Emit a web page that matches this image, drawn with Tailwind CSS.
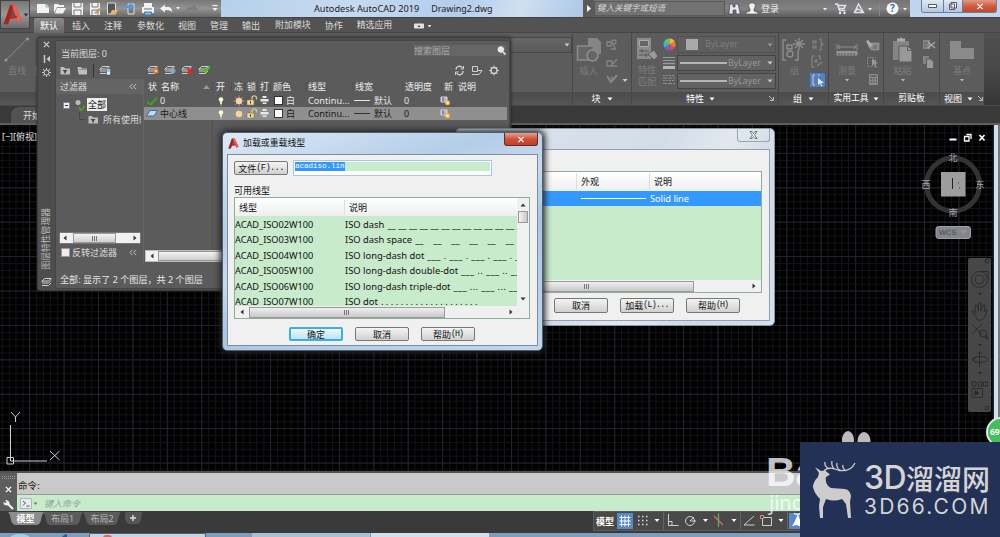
<!DOCTYPE html>
<html lang="zh-CN">
<head>
  <meta charset="UTF-8" />
  <meta name="viewport" content="width=device-width, initial-scale=1.0"/>
  <title>Autodesk AutoCAD 2019</title>
  <script src="https://cdn.jsdelivr.net/npm/@tailwindcss/browser@4"></script>
  <style>
    body {
      font-family: 'Noto Sans', 'Noto Sans CJK SC', sans-serif;
    }
    svg {
      flex-shrink: 0;
    }
  </style>
</head>
<body class="relative w-[1000px] h-[537px] overflow-hidden bg-black text-[9px] leading-none whitespace-nowrap text-[#dcdcdc] flex flex-col">

  <!-- Shared icons -->
  <svg class="hidden">
    <symbol id="layers" viewBox="0 0 12 12"><path d="M3.500 2.500H10L7.500 5H1zM1 7h6.500L10 4.500M1 9.500h6.500L10 7M1 5v1M10 2.500v1" fill="none" stroke="#cfcfcf" stroke-width="1"/></symbol>
    <symbol id="bulb" viewBox="0 0 8 10"><circle cx="4" cy="3.500" r="2.300" fill="#fdfbd0"/><path d="M3 5h2v2H3z" fill="#f3edb0"/><path d="M3 7.500h2M3.300 9h1.400" stroke="#ddd"/></symbol>
    <symbol id="sun" viewBox="0 0 12 12"><path d="M6 .5v11M.5 6h11M2 2l8 8M10 2l-8 8" stroke="#a79888" stroke-width="1"/><circle cx="6" cy="6" r="3.200" fill="#f8d2a4"/></symbol>
    <symbol id="lock" viewBox="0 0 12 11"><path d="M6 5V3a2.200 2 0 0 1 4.500 0v1.500" fill="none" stroke="#d9c58b" stroke-width="1.300"/><path d="M1 5h7v5H1z" fill="#efd9a0" stroke="#8a7747" stroke-width=".6"/><path d="M4.500 6.500v2" stroke="#222"/></symbol>
    <symbol id="plot" viewBox="0 0 9 9"><path d="M2.500 0h4v2h-4zM.5 3h8v2.500h-8zM2.500 6.500h4V8h-4z" fill="#e8e8e8"/></symbol>
    <symbol id="newvp" viewBox="0 0 11 10"><path d="M1 1h6v5H1z" fill="#a9b8cc" stroke="#ddd"/><path d="M3 1v5" stroke="#667"/><circle cx="7.500" cy="6.800" r="2.500" fill="#ffb52c"/><circle cx="7.500" cy="6.800" r="1.200" fill="#ffef9a"/></symbol>
    <symbol id="folder" viewBox="0 0 11 9"><path d="M.5 1h3.500l1 1.500h5V8.500H1.500z" fill="#bdbdbd"/><path d="M2 3.500h8" stroke="#777" stroke-width=".6"/></symbol>
    <symbol id="funnel" viewBox="0 0 11 9"><path d="M.5 1h3.500l1 1.500h5V8.500H.5z" fill="#bdbdbd"/><path d="M2.500 4h5L5.800 6v1.500H4.300V6z" fill="#444"/></symbol>
    <symbol id="down" viewBox="0 0 6 4"><path d="M.5.5h5L3 3.500z" fill="currentColor"/></symbol>
    <symbol id="left" viewBox="0 0 4 6"><path d="M3.500.5v5L.5 3z" fill="#333"/></symbol>
    <symbol id="right" viewBox="0 0 4 6"><path d="M.5.5v5L3.500 3z" fill="#333"/></symbol>
    <symbol id="grip" viewBox="0 0 6 5"><path d="M.5 0v5M2.500 0v5M4.500 0v5" stroke="#777" stroke-width="1"/></symbol>
    <symbol id="cross" viewBox="0 0 8 8"><path d="M1 1l6 6M7 1L1 7" stroke="currentColor" stroke-width="1.500"/></symbol>
    <symbol id="alogo" viewBox="0 0 28 24"><path d="M1 23L10 1h7l10 18-6 2-2-5-9 1-3 6z" fill="#cf3f35"/><path d="M10 1l4 1-1 7-6 14H1z" fill="#a5241f"/><path d="M12 11l1.500-4 3.500 6-6 1z" fill="#585858"/><path d="M17 1l10 18-6 2L13 2z" fill="#e36457"/><path d="M10 14l9-1 1 3-11 1z" fill="#b52f28"/></symbol>
    <symbol id="rings" viewBox="0 0 9 8"><path d="M4 1L1 4l3 3M8 1L5 4l3 3" fill="none" stroke="#c8c8c8" stroke-width="1.100"/></symbol>
  </svg>

  <!-- Title bar -->
  <header class="flex h-[17px] shrink-0 bg-gradient-to-b from-[#bfd4ee] to-[#c3d7ee] pl-[30px] text-[#222]">
    <div class="flex w-[191px] items-center bg-gradient-to-b from-[#777] via-[#939393] to-[#686868] pl-[5px]">
      <svg class="w-[186px] h-[17px]" viewBox="35 0 186 17">
        <g fill="#f2f2f2">
          <path d="M37 4h9l3 3v6H37z"/><path d="M46 4v3h3" fill="none" stroke="#888" stroke-width=".7"/>
          <path d="M54 4h4l1 1h5v2h-7l-3 6z"/><path d="M57 8h9l-3 5.500h-8z"/>
          <path d="M72 3h11v12H72zM90 3h10v12H90z"/><path d="M107.500 3h8v11h-8z" fill="#555" stroke="#ddd"/>
          <path d="M128 4h6v10h-6z" fill="#777" stroke="#ddd"/>
          <path d="M144 3h8v4h-8zM142 7h12v6h-12z"/><path d="M144 9h8M144.500 12h7v3h-7z" stroke="#4a7396" fill="#7bc1ee"/>
          <path d="M160 8.500l5-4V7h3q4 0 4 5-2-2.500-7-2v2.500z"/>
        </g>
        <path d="M74 3v4h7V3M74 15v-5h7v5M92 3v4h6V3M92 15v-5h6v5" fill="none" stroke="#777"/>
        <path d="M94 13l5-5 2 2-5 4z" fill="#cc9855"/>
        <path d="M112 10h6l-2 4h-6z" fill="#e6b563"/>
        <path d="M125 5.500h5V3l4 4-4 3.500V8h-5z" fill="#4b9ce0"/>
        <path d="M198 8.500l-5-4V7h-3q-4 0-4 5 2-2.500 7-2v2.500z" fill="#7e7e7e"/>
        <path d="M176 7h4l-2 2.500zM212.500 8h5l-2.500 3z" fill="#f0f0f0"/><path d="M203 7h4l-2 2.500z" fill="#999"/>
        <path d="M212.500 5.500h5" stroke="#f0f0f0" stroke-width="1.200"/>
      </svg>
    </div>
    <div class="flex w-[362px] items-center bg-[linear-gradient(115deg,#b6cfec,#c6daf0_35%,#b3cdeb_65%,#cfe0f1_82%,#abc7e6)] pl-[93px] text-[9.200px]">
      <span>Autodesk AutoCAD 2019</span>
      <span class="pl-[12px] text-[9px]">Drawing2.dwg</span>
    </div>
    <div class="flex w-[327px] items-center bg-gradient-to-b from-[#757575] via-[#828282] to-[#5c5c5c]">
      <div class="flex w-[11px] h-full items-center justify-center bg-[#5a5a5a]"><svg class="w-[4px] h-[7px]" viewBox="0 0 4 7"><path d="M0 0v7l4-3.500z" fill="#fff"/></svg></div>
      <div class="flex w-[131px] h-[15px] items-center border border-[#5a5a5a] bg-[#727272] px-[2px] text-[8.500px] italic text-[#d5d5d5]">键入关键字或短语</div>
      <svg class="w-[36px] h-[17px]" viewBox="725 0 36 17">
        <path d="M730 4h3v3h2V4h3l2 8v2h-4v-4h-3v4h-4v-2z" fill="#e4e9f2" stroke="#3a3f4a" stroke-width=".7"/>
        <path d="M752 3c3 0 3.500 2 3 4l-1 2v2l4 1.500V14h-12v-1.500l4-1.500V9l-1-2c-.5-2 0-4 3-4z" fill="#f2f2f2" stroke="#444" stroke-width=".6"/>
      </svg>
      <span class="text-[9px] text-[#f0f0f0]">登录</span>
      <svg class="ml-auto w-[88px] h-[17px]" viewBox="822 0 88 17">
        <path d="M823 8h4l-2 2.500zM868 8h4l-2 2.500zM903 8h4l-2 2.500z" fill="#eee"/>
        <path d="M835 4h2.500l2 6.500h6M838 5.500h7.500L844 8.500h-5" fill="none" stroke="#dfe5f0" stroke-width="1.500"/><circle cx="840" cy="13" r="1.200" fill="#eee"/><circle cx="844.500" cy="13" r="1.200" fill="#eee"/>
        <path d="M858.500 4l-4 8.500h9zM854 12l4-3 5 3" fill="none" stroke="#dfe5f0" stroke-width="1.400"/>
        <path d="M879.500 3v13" stroke="#888"/>
        <circle cx="892.500" cy="8.500" r="6" fill="#f6f6f6"/>
        <text x="892.500" y="12.200" text-anchor="middle" font-size="10" font-weight="bold" fill="#2671b8">?</text>
      </svg>
    </div>
    <div class="flex flex-1 pl-[11px]">
      <div class="flex h-[13px] w-[76px] overflow-hidden rounded-b-[3px] border border-t-0 border-[#6f7f95] text-[#555]">
        <div class="flex w-[21px] items-center justify-center bg-gradient-to-b from-[#dfe9f5] to-[#b4c6dc]"><svg class="w-[9px] h-[4px]" viewBox="0 0 9 4"><path d="M.5.5h8v3h-8z" fill="#fff" stroke="#556"/></svg></div>
        <div class="flex w-[20px] items-center justify-center border-x border-[#6f7f95] bg-gradient-to-b from-[#dfe9f5] to-[#b4c6dc]"><svg class="w-[8px] h-[8px]" viewBox="0 0 8 8"><path d="M2 .5h5.500V6H2zM.5 2h5v5.500h-5z" fill="#fff" stroke="#556"/><path d="M2.500 4h1v1h-1z" fill="#556"/></svg></div>
        <div class="flex flex-1 items-center justify-center bg-gradient-to-b from-[#e39a84] via-[#cf5d42] to-[#c4432a] text-white"><svg class="w-[8px] h-[7px]"><use href="#cross"/></svg></div>
      </div>
    </div>
  </header>

  <!-- Ribbon tabs -->
  <nav class="flex h-[16px] shrink-0 items-center border-b border-[#454545] border-t border-t-[#444] bg-[#535353] pl-[34px] pt-px text-[9px]">
    <a class="flex h-[15px] w-[30px] items-center justify-center rounded-t-[2px] bg-gradient-to-b from-[#8a8a8a] to-[#6a6a6a] text-white">默认</a>
    <a class="pl-[8px]">插入</a>
    <a class="pl-[14px]">注释</a>
    <a class="pl-[15px]">参数化</a>
    <a class="pl-[14px]">视图</a>
    <a class="pl-[14px]">管理</a>
    <a class="pl-[14px]">输出</a>
    <a class="pl-[15px] text-[8.900px]">附加模块</a>
    <a class="pl-[14px]">协作</a>
    <a class="pl-[14px] text-[8.900px]">精选应用</a>
    <svg class="ml-[22px] w-[18px] h-[6px]" viewBox="0 0 18 6"><rect width="10" height="5" y=".5" rx="1" fill="#e2e2e2"/><path d="M3.500 4L5 2l1.500 2z" fill="#444"/><path d="M13.500 2h4l-2 2.500z" fill="#e2e2e2"/></svg>
  </nav>

  <!-- Ribbon panels -->
  <section class="flex h-[73px] shrink-0 border-b border-[#4a4a4a] bg-[#5c5c5c] text-[#7d7d7d]">
    <div class="flex w-[573px] flex-col border-r border-[#474747]">
      <div class="flex flex-1 items-start justify-between pt-[4px]">
        <div class="flex w-[60px] flex-col pl-[4px]">
          <svg class="w-[26px] h-[26px]" viewBox="0 0 26 26"><path d="M2 23L23 2" stroke="#888" stroke-width="1"/><circle cx="2" cy="23" r="1.500" fill="#999"/><circle cx="23.500" cy="2" r="1.500" fill="#999"/></svg>
          <div class="flex gap-[7px] pl-[4px] pt-[3px]"><span>直线</span><span>多段线</span></div>
        </div>
        <div class="flex h-[16px] w-[80px] items-center justify-end border border-[#464646] bg-gradient-to-b from-[#666] to-[#5a5a5a] pr-px text-[#ccc]"><svg class="w-[6px] h-[4px]"><use href="#down"/></svg></div>
      </div>
      <div class="h-[13px] bg-gradient-to-b from-[#4b4b4b] to-[#555]"></div>
    </div>

    <div class="flex w-[59px] flex-col border-r border-[#474747]">
      <div class="flex-1 pl-[3px] pt-[3px]">
        <svg class="h-[52px] w-[54px]" viewBox="576 36 54 52">
          <path d="M588 38h9l4 4v12h-13z" fill="#858585"/><path d="M577.500 46h16v14h-16z" fill="#666" stroke="#8a8a8a" stroke-width="1.500"/><circle cx="592.500" cy="55.500" r="5.500" fill="#666" stroke="#8f8f8f" stroke-width="1.500"/>
          <g fill="none" stroke="#858585" stroke-width="1.300"><path d="M607 42h4v4h-4zM611 49h5M613 44l2 4"/><circle cx="614" cy="42" r="2"/><path d="M607 61h5v5h-5zM611 66l6-7M608 66h9"/><path d="M607 76l4 6 5-6M611 77l2 3 4-5" stroke-width="2"/></g>
          <path d="M622.500 79h5l-2.500 3z" fill="#ccc"/>
          <text x="588.500" y="73.500" text-anchor="middle" font-size="9" fill="#7d7d7d">插入</text>
        </svg>
      </div>
      <div class="flex h-[13px] items-center justify-center gap-[6px] bg-gradient-to-b from-[#4b4b4b] to-[#555] text-white"><span>块</span><svg class="w-[6px] h-[4px]"><use href="#down"/></svg></div>
    </div>

    <div class="flex w-[147px] flex-col border-r border-[#474747]">
      <div class="flex flex-1 pt-[3px]">
        <div class="flex w-[30px] flex-col items-center text-[9px]">
          <svg class="h-[27px] w-[24px]" viewBox="0 0 24 27"><path d="M2 2h14v21H2z" fill="#8c8c8c"/><path d="M4.500 4.500h9v6h-9z" fill="#666" stroke="#aaa"/><path d="M4 15h10M4 19h10M7 13v4M11 17v4" stroke="#555"/><path d="M13 18l6-4 4 6-4 4z" fill="#999" stroke="#5c5c5c"/></svg>
          <span class="pt-[2px]">特性</span><span class="pt-[3px]">匹配</span>
        </div>
        <div class="flex w-[14px] flex-col items-center gap-[5px] pt-[2px]">
          <svg class="h-[13px] w-[13px]" viewBox="-6.500 -6.500 13 13"><path d="M0 0V-6A6 6 0 0 1 5.200-3z" fill="#f6b93b"/><path d="M0 0L5.200-3A6 6 0 0 1 5.200 3z" fill="#f2792e"/><path d="M0 0L5.200 3A6 6 0 0 1 0 6z" fill="#e2495c"/><path d="M0 0V6A6 6 0 0 1-5.200 3z" fill="#7a5bd6"/><path d="M0 0L-5.200 3A6 6 0 0 1-5.200-3z" fill="#35b7d8"/><path d="M0 0L-5.200-3A6 6 0 0 1 0-6z" fill="#63c95a"/></svg>
          <svg class="h-[13px] w-[12px]" viewBox="0 0 12 13"><path d="M0 1.500h12M0 4.500h12" stroke="#9a9a9a"/><path d="M0 7.500h12" stroke="#9a9a9a" stroke-width="1.500"/><path d="M0 11.500h12" stroke="#b5b5b5" stroke-width="3"/></svg>
          <svg class="h-[11px] w-[12px]" viewBox="0 0 12 11"><path d="M0 1.500h12M0 6.500h12" stroke="#8f8f8f" stroke-dasharray="2 1"/><path d="M0 4h12M0 9.500h12" stroke="#8f8f8f" stroke-dasharray="4 1"/></svg>
        </div>
        <div class="flex flex-col gap-[2px] pl-px text-[8.800px] text-[#979797]">
          <div class="flex h-[17px] w-[99px] items-center border border-[#505050] bg-[#5e5e5e] pl-[8px]"><span class="h-[11px] w-[12px] bg-[#a9a9a9]"></span><span class="pl-[7px] text-[#7e7e7e]">ByLayer</span><svg class="ml-auto mr-[2px] w-[6px] h-[4px]"><use href="#down"/></svg></div>
          <div class="flex h-[16px] w-[99px] items-center border border-[#444] bg-[#626262] pl-[2px]"><span class="h-[2px] w-[47px] bg-[#b5b5b5]"></span><span class="pl-px">ByLayer</span><svg class="ml-auto mr-[2px] w-[6px] h-[4px] text-[#ccc]"><use href="#down"/></svg></div>
          <div class="flex h-[16px] w-[99px] items-center border border-[#444] bg-[#626262] pl-[2px]"><span class="h-[2px] w-[47px] bg-[#b5b5b5]"></span><span class="pl-px">ByLayer</span><svg class="ml-auto mr-[2px] w-[6px] h-[4px] text-[#ccc]"><use href="#down"/></svg></div>
        </div>
      </div>
      <div class="flex h-[13px] items-center bg-gradient-to-b from-[#4b4b4b] to-[#555] pl-[54px] text-white"><span>特性</span><svg class="ml-[5px] w-[6px] h-[4px]"><use href="#down"/></svg><svg class="ml-auto mr-[4px] w-[5px] h-[5px]" viewBox="0 0 5 5"><path d="M0 0l4 4M4.500 1v3.500H1" stroke="#bbb" fill="none"/></svg></div>
    </div>

    <div class="flex w-[50px] flex-col border-r border-[#474747]">
      <div class="flex-1 pl-[2px] pt-[3px]">
        <svg class="h-[54px] w-[46px]" viewBox="781 36 46 54">
          <g fill="none" stroke="#8d8d8d" stroke-width="1.400"><path d="M786 40h-3v20h3M795 60h3V50M787 45h5v4h-5z"/><circle cx="790" cy="54" r="3"/><path d="M799 38v12M793 44h12M795 40l8 8M803 40l-8 8"/></g>
          <g fill="none" stroke="#858585" stroke-width="1.200"><path d="M813 41h3v2h-3zM813 46h3v2h-3zM819 39h2v4l2 1-2 1v5h-2M815 56h-3v11h3M818 56h2v4M815 60h2v2h-2zM817 66l5-4"/></g>
          <path d="M809.500 72.500h16v15h-16z" fill="#5a80b9" stroke="#3d5d92"/><path d="M815 75h-2v10h2M818 75h2" fill="none" stroke="#bcd" stroke-width="1"/><path d="M818 78v7l2-1.500 1.500 3 1-.5-1.500-3h3z" fill="#dde6f2"/>
          <text x="794.500" y="73.500" text-anchor="middle" font-size="9" fill="#7d7d7d">组</text>
        </svg>
      </div>
      <div class="flex h-[13px] items-center justify-center gap-[6px] bg-gradient-to-b from-[#4b4b4b] to-[#555] text-white"><span>组</span><svg class="w-[6px] h-[4px]"><use href="#down"/></svg></div>
    </div>

    <div class="flex w-[55px] flex-col border-r border-[#474747]">
      <div class="flex-1 pl-[4px] pt-[3px]">
        <svg class="h-[54px] w-[48px]" viewBox="833 36 48 54">
          <path d="M837 44v6M857 44v6M838 47h18M840 45l-2 2 2 2M854 45l2 2-2 2" stroke="#8d8d8d" fill="none"/><path d="M836.500 51h21v4.500h-21z" fill="#949494"/><path d="M839 53v2M842 53v2M845 53v2M848 53v2M851 53v2M854 53v2" stroke="#555"/>
          <path d="M871 43h8v7h-8z" fill="#8a8a8a" stroke="#aaa" stroke-width=".5"/><path d="M873 46h4M873 48h4" stroke="#666"/><path d="M868 40l5 5-2 1-1 3-4-8z" fill="#aaa"/>
          <path d="M867.500 57.500h8v9h-8z" fill="none" stroke="#888" stroke-dasharray="1.500 1"/><path d="M872 58v8l2-2 2 4 1-.5-2-4h3z" fill="#999"/>
          <path d="M869 74h9v11h-9z" fill="#8a8a8a"/><path d="M870.500 76h6M870.500 79h1.500M873 79h1.500M876 79h1M870.500 82h1.500M873 82h1.500M876 82h1" stroke="#5a5a5a" stroke-width="1.300"/>
          <path d="M845 79h4l-2 2.500z" fill="#bbb"/>
          <text x="847" y="73.500" text-anchor="middle" font-size="9" fill="#7d7d7d">测量</text>
        </svg>
      </div>
      <div class="flex h-[13px] items-center justify-center gap-[4px] bg-gradient-to-b from-[#4b4b4b] to-[#555] text-[8.800px] text-white"><span>实用工具</span><svg class="w-[6px] h-[4px]"><use href="#down"/></svg></div>
    </div>

    <div class="flex w-[56px] flex-col border-r border-[#474747]">
      <div class="flex-1 pl-[4px] pt-[3px]">
        <svg class="h-[54px] w-[48px]" viewBox="888 36 48 54">
          <path d="M893 41h16v19h-16z" fill="#858585"/><path d="M897 38.500h3l1-1.500 1 1.500h3v3h-8z" fill="#aaa"/><path d="M899 46h9l4 4v12h-13z" fill="#999" stroke="#5c5c5c"/><path d="M907.500 46v4.500h4" fill="none" stroke="#5c5c5c"/>
          <path d="M923 40h7v9h-7z" fill="#858585"/><path d="M924 43h4M924 46h3" stroke="#5c5c5c"/><path d="M928 42l7 6M935 42l-7 6" stroke="#aaa" stroke-width="1.200"/>
          <path d="M923 56h6v8h-6z" fill="#858585"/><path d="M926.500 59h4l3 2.500v7h-7z" fill="#999" stroke="#5c5c5c"/>
          <path d="M901 79h4l-2 2.500z" fill="#bbb"/>
          <text x="902.500" y="73.500" text-anchor="middle" font-size="9" fill="#7d7d7d">粘贴</text>
        </svg>
      </div>
      <div class="flex h-[13px] items-center justify-center bg-gradient-to-b from-[#4b4b4b] to-[#555] text-[8.800px] text-white">剪贴板</div>
    </div>

    <div class="flex w-[44px] flex-col">
      <div class="flex-1 pl-[5px] pt-[3px]">
        <svg class="h-[54px] w-[34px]" viewBox="945 36 34 54">
          <path d="M950 41h11v7h13v11h-24z" fill="#8a8a8a"/>
          <path d="M960 79h4l-2 2.500z" fill="#bbb"/>
          <text x="962" y="73.500" text-anchor="middle" font-size="9" fill="#7d7d7d">基点</text>
        </svg>
      </div>
      <div class="flex h-[13px] items-center gap-[5px] bg-gradient-to-b from-[#4b4b4b] to-[#555] pl-[4px] text-white"><span>视图</span><svg class="w-[6px] h-[4px]"><use href="#down"/></svg><svg class="w-[5px] h-[5px]" viewBox="0 0 5 5"><path d="M0 0l4 4M4.500 1v3.500H1" stroke="#bbb" fill="none"/></svg></div>
    </div>
    <div class="flex-1 bg-gradient-to-b from-[#505050] via-[#484848] to-[#363636]"></div>
  </section>

  <!-- Drawing tabs -->
  <div class="flex h-[19px] shrink-0 items-end border-b-2 border-[#5e5e5e] bg-[#393939]">
    <div class="ml-[11px] flex h-[16px] w-[60px] items-center rounded-tl-[8px] bg-[#525252] pl-[12px]">开始</div>
  </div>

  <!-- Drawing area -->
  <main class="flex h-[346px] shrink-0">
    <svg class="w-[994px] h-[346px] bg-black" viewBox="0 125 994 346">
      <defs>
        <pattern id="minor" x="29.300" y="153" width="6.880" height="6.880" patternUnits="userSpaceOnUse"><path d="M0 .5h6.880M.5 0v6.880" stroke="#121317" stroke-width="1"/></pattern>
        <pattern id="major" x="29.100" y="152.800" width="34.420" height="34.420" patternUnits="userSpaceOnUse"><path d="M0 .5h34.420M.5 0v34.420" stroke="#20222d" stroke-width="1"/></pattern>
      </defs>
      <rect y="125" width="994" height="346" fill="url(#minor)"/>
      <rect y="125" width="994" height="346" fill="url(#major)"/>
      <text x="2" y="139.500" font-size="9" fill="#e0e0e0">[−][俯视][二维线框]</text>

      <!-- UCS icon -->
      <g fill="none" stroke="#cfcfcf" stroke-width="1">
        <path d="M10.500 425v36h36.500M7 457.500h6.500v6.500H7z"/>
        <path d="M11 412l4.500 5 4.500-5M15.500 417v5M50 451l9.500 9M59.500 451l-9.500 9"/>
      </g>

      <!-- Window controls -->
      <path d="M949.500 139.500h7" stroke="#fff" stroke-width="2"/>
      <path d="M966.500 134.500h4.500v4.500M964.500 136.500h4.500v4.500h-4.500z" fill="none" stroke="#fff" stroke-width="1.300"/>
      <path d="M979.500 135l5 5.500M984.500 135l-5 5.500" stroke="#fff" stroke-width="1.700"/>

      <!-- View cube -->
      <circle cx="953" cy="184.500" r="26.500" fill="none" stroke="#333" stroke-width="5"/>
      <path d="M941 172h24.500v24.500H941z" fill="#9d9d9d"/>
      <path d="M952.500 178v11" stroke="#222" stroke-width="1"/><path d="M958 183h1M959 188h1" stroke="#444"/>
      <g font-size="9" fill="#a5a5a5" text-anchor="middle"><text x="953" y="161">北</text><text x="953" y="215.500">南</text><text x="926" y="188">西</text><text x="980" y="188">东</text></g>
      <rect x="936" y="226.500" width="34.500" height="12" rx="2.500" fill="#85868c" stroke="#a0a0a6"/>
      <text x="939" y="235.300" font-size="7.500" fill="#45464c" font-family="Liberation Sans, sans-serif">WCS</text><path d="M961 231h5l-2.500 3z" fill="none" stroke="#aaa" stroke-width=".7"/>

      <!-- Navigation bar -->
      <rect x="968" y="258" width="23" height="154" rx="2" fill="#474747"/>
      <g fill="none" stroke="#2c2c2c" stroke-width="1">
        <circle cx="987" cy="261" r="2"/><circle cx="987" cy="408" r="2"/>
        <circle cx="979.500" cy="279.500" r="8"/><circle cx="979.500" cy="279.500" r="4.500"/><path d="M980 271.500h8v8"/>
        <path d="M976 317l-4-6q1-2 3 1l1 1-1-8q1.500-1.500 2.500 1l1 5v-8q1.500-1.500 2.500 0v8l2-6q2-1 2 1l-1 6 1.500-2q2-1 1.500 1l-3 7-2 2h-5z"/>
        <path d="M972 324l10 11M982 324l-10 10"/><circle cx="983" cy="333.500" r="3.500"/><path d="M985 336l3 3" stroke-width="2"/>
        <ellipse cx="980" cy="359.500" rx="7.500" ry="3"/><path d="M979.500 352v15M977 354l2.500-2.500L982 354M976 357l-3 3 3 3"/>
        <path d="M972 382h4v4h-4zM978 382h4v4h-4zM983.500 382h4v4h-4zM972 388.500h10.500v9H972z"/><path d="M975 390.500v5l4-2.500z" fill="#282828"/>
      </g>
      <path d="M978 293h4l-2 2zM978 344h4l-2 2zM978 372h4l-2 2z" fill="#222"/>
    </svg>
    <div class="w-[6px] border-l-4 border-[#cfdff2] bg-[#777]"></div>
  </main>

  <!-- Command line -->
  <section class="flex h-[40px] shrink-0 border-t-2 border-[#505050]">
    <div class="flex w-[17px] flex-col items-center justify-between bg-[#5d5d5d] pb-px pt-[3px] text-white">
      <svg class="h-[4px] w-[13px]" viewBox="0 0 13 4"><path d="M0 .5h13M0 2.500h13" stroke="#999" stroke-dasharray="1 1"/></svg>
      <svg class="h-[7px] w-[7px]"><use href="#cross"/></svg>
      <svg class="h-[11px] w-[11px]" viewBox="0 0 11 11"><path d="M4 4l6 6" stroke="#f0f0f0" stroke-width="2.200"/><path d="M2 1l1.500 2L2.500 4 .5 3q-.5 3 3 3.500 3.500-.5 3-3Q5.500.5 2 1z" fill="#f0f0f0"/></svg>
    </div>
    <div class="flex flex-1 flex-col">
      <div class="flex h-[22px] items-end border-b border-[#999] bg-[#c9c9c9] pb-[3px] pl-[1px] text-[9.600px] text-[#111]">命令:</div>
      <div class="flex h-[16px] items-center bg-[#c8ebcb] pl-[3px] text-[9px] italic text-[#91a596]">
        <svg class="mr-[6px] h-[11px] w-[18px]" viewBox="0 0 18 11"><path d="M.5.5h11v10H.5z" fill="#e9e9f0" stroke="#b3b3bd"/><path d="M3 3l2.500 2L3 7.500M6.500 8H9.500" fill="none" stroke="#555"/><path d="M13.500 4.500h4l-2 2.500z" fill="#777"/></svg>
        <span>键入命令</span>
      </div>
    </div>
  </section>

  <!-- Status bar -->
  <footer class="flex h-[22px] shrink-0 items-start justify-between bg-[#3a3a3a] text-[9px]">
    <svg class="h-[16px] w-[150px]" viewBox="0 511 150 16">
      <path d="M83 512h38q-2 2-3 8-1 5-5 5H91q-4 0-5-5-1-6-3-8zM43 512h40q-2 2-3 8-1 5-5 5H51q-4 0-5-5-1-6-3-8z" fill="#5b5b5b"/>
      <path d="M8 512h36q-2 2-3 8-1 5-5 5H16q-4 0-5-5-1-6-3-8z" fill="#8c8c8c"/>
      <path d="M125 512h17q0 12-5 12h-7q-4 0-5-5z" fill="#555"/>
      <g font-size="9" text-anchor="middle" fill="#b5b5b5"><text x="25.500" y="521.700" font-weight="bold" fill="#fff">模型</text><text x="62.500" y="521.700">布局1</text><text x="102" y="521.700">布局2</text></g>
      <path d="M130 518h6M133 515v6" stroke="#ddd" stroke-width="1.400"/>
    </svg>
    <div class="flex h-[20px] w-[407px] items-center border border-[#5c5c5c] bg-[#494949]">
      <span class="pl-[2px] font-bold text-white">模型</span>
      <svg class="ml-px h-[18px] w-[186px]" viewBox="615 513 186 18">
        <path d="M617 514h16v16h-16z" fill="#5789c8"/>
        <path d="M621.500 516.500v11M625 516.500v11M628.500 516.500v11M619.500 518.500h11M619.500 522h11M619.500 525.500h11" stroke="#fff" stroke-width="1"/>
        <path d="M638 517.500h10M638 521.500h10M638 525.500h10" stroke="#ddd" stroke-width="1.500" stroke-dasharray="1.500 2.500"/>
        <path d="M654.500 520h5l-2.500 3zM703 520h5l-2.500 3zM731.500 520h5l-2.500 3zM778.500 520h5l-2.500 3z" fill="#fff"/>
        <path d="M663.500 513v18M740.500 513v18M787.500 513v18" stroke="#636363"/>
        <g fill="none" stroke="#d0d0d0" stroke-width="1">
          <path d="M668.500 515v11.500h10M668.500 522.500h3.500v4"/><circle cx="690" cy="522" r="4.500"/><path d="M690 522h6M690 522l4-4"/>
          <path d="M754 517l-10 9h10.500M762.500 518.500h9v8h-9z"/>
        </g>
        <path d="M714 517l9 9" stroke="#e06666" stroke-width="1.300"/><path d="M718.500 514.500V528" stroke="#5db35d" stroke-width="1.300"/><path d="M760.500 516.500h3v3h-3z" fill="#494949" stroke="#d88c78"/>
        <path d="M789 514h12v16h-12z" fill="#5789c8"/><path d="M794 524l4-9 3 9v4l-4-2-5 1z" fill="#fff"/>
      </svg>
    </div>
  </footer>
  <div class="flex h-[4px] shrink-0 bg-[#7e9cbb]">
    <svg class="h-[4px] w-[89px]" viewBox="0 0 89 4"><ellipse cx="20" cy="5" rx="10" ry="4" fill="#9fcfe5"/><path d="M62 4q2-3 5-3v3z" fill="#2858a8"/></svg>
    <div class="flex w-[117px] justify-center rounded-t-[2px] border border-b-0 border-[#4d6179] bg-[#c6d5e3] pr-[80px]"><span class="mt-px h-[3px] w-[9px] rounded-t-full bg-[#d26b63]"></span></div>
    <div class="ml-[46px] w-[118px] bg-[#a9c0d7]"></div>
    <div class="ml-[1px] w-[118px] bg-[#d3e0ec]"></div>
  </div>

  <!-- Application button -->
  <div class="absolute left-0 top-0 flex h-[29px] w-[30px] items-center justify-between border border-[#444] bg-gradient-to-b from-[#777] via-[#989898] to-[#6c6c6c] pl-[2px]">
    <svg class="h-[21px] w-[20px]" preserveAspectRatio="none" viewBox="0 0 28 24"><use href="#alogo" width="28" height="24"/></svg>
    <svg class="h-[4px] w-[6px] text-[#333]"><use href="#down"/></svg>
  </div>

  <!-- Layer properties palette -->
  <aside class="absolute left-[37px] top-[37px] flex h-[254px] w-[474px] rounded-[3px] border border-[#3e3e3e] bg-[#4d4d4d] shadow-[0_0_3px_#222]">
    <div class="flex w-[17px] flex-col items-center pb-[2px] pt-[3px] text-[#ccc]">
      <svg class="h-[7px] w-[7px]"><use href="#cross"/></svg>
      <svg class="mt-[7px] h-[8px] w-[8px]" viewBox="0 0 8 8"><path d="M1.500 0v8" stroke="#ccc" stroke-width="1.500"/><path d="M7 1v6L3.500 4z" fill="#ccc"/></svg>
      <svg class="mt-[5px] h-[9px] w-[9px]" viewBox="0 0 9 9"><circle cx="4.500" cy="4.500" r="2.500" fill="none" stroke="#ccc"/><path d="M4.500 0v2M4.500 7v2M0 4.500h2M7 4.500h2M1 1l2 2M6 6l2 2M8 1L6 3M3 6L1 8" stroke="#ccc"/></svg>
      <span class="mt-auto rotate-180 text-[8.800px] text-[#bbb] [writing-mode:vertical-rl] [text-orientation:sideways]">图层特性管理器</span>
      <svg class="mt-[6px] h-[12px] w-[12px]"><use href="#layers"/></svg>
    </div>
    <div class="mt-[2px] mb-px flex flex-1 flex-col rounded-[2px] border border-[#454545] bg-[#5b5b5b] text-[9px]">
      <div class="flex h-[22px] shrink-0 items-start justify-between pl-[5px] pr-[3px] pt-[4px]">
        <span class="pt-[4px]">当前图层: 0</span>
        <div class="flex h-[11px] w-[92px] items-center justify-between bg-[#666] text-[#aaa]"><span>搜索图层</span><svg class="h-[9px] w-[9px]" viewBox="0 0 9 9"><circle cx="3.800" cy="3.500" r="2.800" fill="#dce8f0" stroke="#eee"/><path d="M6 6l2.500 2.500" stroke="#eee" stroke-width="1.500"/></svg></div>
      </div>
      <div class="flex h-[14px] shrink-0 items-center pl-[4px] pr-[8px]">
        <svg class="h-[9px] w-[11px]"><use href="#funnel"/></svg>
        <svg class="ml-[6px] h-[9px] w-[11px]"><use href="#folder"/></svg>
        <span class="ml-[5px] h-[13px] w-px bg-[#333]"></span>
        <svg class="ml-[5px] h-[12px] w-[12px]" viewBox="0 0 12 12"><use href="#layers"/><path d="M7.500 5h4v6h-4z" fill="#eee" stroke="#357" stroke-width=".6"/><path d="M8.500 7h2" stroke="#37c"/></svg>
        <svg class="ml-[36px] h-[12px] w-[12px]" viewBox="0 0 12 12"><use href="#layers"/><circle cx="9" cy="7" r="2.600" fill="#f47a28"/><circle cx="9" cy="7" r="1" fill="#ffe9a0"/></svg>
        <svg class="ml-[5px] h-[12px] w-[12px]" viewBox="0 0 12 12"><use href="#layers"/><path d="M9 4v6M6 7h6M7 5l4 4M11 5L7 9" stroke="#83b4d1"/></svg>
        <svg class="ml-[5px] h-[12px] w-[12px]" viewBox="0 0 12 12"><use href="#layers"/><path d="M6.500 4.500l5 5M11.500 4.500l-5 5" stroke="#f01c1c" stroke-width="1.800"/></svg>
        <svg class="ml-[5px] h-[12px] w-[12px]" viewBox="0 0 12 12"><use href="#layers"/><path d="M5 5l2.500 3L12 2" fill="none" stroke="#4ec41a" stroke-width="2"/></svg>
        <svg class="ml-auto h-[11px] w-[46px]" viewBox="457 64 46 11"><g fill="none" stroke="#d0d0d0"><path d="M458 68.500a3.500 3.500 0 0 1 6.500-1.500M465 70a3.500 3.500 0 0 1-6.500 2" stroke-width="1.300"/><path d="M465.500 65v3h-3M457.500 74v-3h3"/><path d="M474.500 65.500h5v5h-5zM474 73.500h7l3-4h-4" /><circle cx="496" cy="69.500" r="3" stroke-width="1.300"/><path d="M496 64.500v2M496 72.500v2M491 69.500h2M499 69.500h2M492.500 66l1.500 1.500M498 71.500l1.500 1.500M499.500 66l-1.500 1.500M494 71.500l-1.500 1.500"/></g></svg>
      </div>
      <div class="flex flex-1 pt-[2px]">
        <div class="flex w-[88px] flex-col border-r border-[#666]">
          <div class="flex h-[15px] items-center justify-between bg-[#646464] pl-[4px] pr-[6px]"><span>过滤器</span><svg class="h-[7px] w-[8px]"><use href="#rings"/></svg></div>
          <div class="mt-[3px] flex h-[15px] items-center pl-[7px]">
            <svg class="h-[14px] w-[24px]" viewBox="0 0 24 14"><path d="M.5 4.500h6v6h-6z" fill="#eee" stroke="#888"/><path d="M2 7.500h3" stroke="#235"/><path d="M8 7.500h5" stroke="#444" stroke-dasharray="1 1"/><circle cx="15" cy="4.500" r="2.500" fill="#bbb"/><path d="M16 9.500l2 3 4-5" fill="none" stroke="#4aa522" stroke-width="1.500"/></svg>
            <span class="flex h-[13px] items-center bg-[#ededed] px-[1px] text-[#111]">全部</span>
          </div>
          <div class="flex h-[14px] w-[85px] items-center overflow-hidden pl-[22px]">
            <svg class="h-[14px] w-[8px]" viewBox="0 0 8 14"><path d="M1.500 0v7.500H8" fill="none" stroke="#333" stroke-dasharray="1 1"/></svg>
            <svg class="ml-[2px] h-[9px] w-[11px]"><use href="#funnel"/></svg><span class="pl-[4px]">所有使用的图层</span>
          </div>
          <div class="mt-auto flex h-[12px] w-[82px] items-center justify-between border border-[#777] bg-[#f1f1f1] px-[3px] ml-[3px]">
            <svg class="h-[6px] w-[4px]"><use href="#left"/></svg>
            <div class="mr-[11px] flex h-[10px] w-[43px] items-center justify-center border border-[#999] bg-gradient-to-b from-[#f3f3f3] to-[#cfcfcf]"><svg class="h-[5px] w-[6px]"><use href="#grip"/></svg></div>
            <svg class="h-[6px] w-[4px]"><use href="#right"/></svg>
          </div>
          <div class="mb-[3px] flex h-[17px] items-center pl-[5px] pr-[6px]"><span class="h-[9px] w-[9px] border border-[#999] bg-[#eee]"></span><span class="pl-[2px]">反转过滤器</span><svg class="ml-auto h-[7px] w-[8px]"><use href="#rings"/></svg></div>
        </div>
        <div class="flex flex-1 flex-col">
          <div class="grid h-[15px] grid-cols-[4px_12px_52px_19px_13px_13px_13px_35px_47px_50px_39px_14px_1fr] items-center text-[#eee]">
            <span></span><span>状</span><span class="flex items-center justify-between pl-[1px] pr-[2px]">名称<svg class="h-[4px] w-[7px]" viewBox="0 0 7 4"><path d="M0 4h7L3.500 0z" fill="#999"/></svg></span><span class="border-l border-[#505050] pl-[3px]">开</span><span class="border-l border-[#505050] pl-[2px]">冻</span><span class="border-l border-[#505050] pl-[2px]">锁</span><span class="border-l border-[#505050] pl-[2px]">打</span><span class="border-l border-[#505050] pl-[2px]">颜色</span><span class="border-l border-[#505050] pl-[2px]">线型</span><span class="border-l border-[#505050] pl-[2px]">线宽</span><span class="border-l border-[#505050] pl-[2px]">透明度</span><span class="border-l border-[#505050] pl-[2px]">新</span><span class="border-l border-[#505050] pl-[2px]">说明</span>
          </div>
          <div class="mr-[2px] grid h-[13px] grid-cols-[16px_57px_16px_13px_14px_14px_34px_46px_46px_41px_1fr] items-center text-[#e6e6e6]">
            <svg class="ml-[2px] h-[10px] w-[12px]" viewBox="0 0 12 10"><path d="M1 5.500l3.500 3L11 1.500" fill="none" stroke="#3fa118" stroke-width="2"/></svg><span>0</span>
            <svg class="h-[10px] w-[8px]"><use href="#bulb"/></svg><svg class="h-[12px] w-[12px]"><use href="#sun"/></svg><svg class="h-[11px] w-[12px]"><use href="#lock"/></svg><svg class="h-[9px] w-[9px]"><use href="#plot"/></svg>
            <span class="flex items-center gap-[3px]"><i class="h-[9px] w-[9px] border border-[#333] bg-white"></i>白</span><span class="text-[9.200px]">Continu...</span><span class="flex items-center gap-[4px]"><i class="h-px w-[16px] bg-[#e6e6e6]"></i>默认</span><span class="pl-[4px]">0</span><svg class="ml-[-1px] h-[10px] w-[11px]"><use href="#newvp"/></svg>
          </div>
          <div class="mr-[2px] grid h-[13px] grid-cols-[16px_57px_16px_13px_14px_14px_34px_46px_46px_41px_1fr] items-center bg-[#8f8f8f] text-[#1b1b1b]">
            <svg class="ml-[2px] h-[7px] w-[12px]" viewBox="0 0 12 7"><path d="M4 .5h7.500L8 6H.5z" fill="#c6d9f3" stroke="#3a6cae"/></svg><span>中心线</span>
            <svg class="h-[10px] w-[8px]"><use href="#bulb"/></svg><svg class="h-[12px] w-[12px]"><use href="#sun"/></svg><svg class="h-[11px] w-[12px]"><use href="#lock"/></svg><svg class="h-[9px] w-[9px]"><use href="#plot"/></svg>
            <span class="flex items-center gap-[3px]"><i class="h-[9px] w-[9px] border border-[#333] bg-white"></i>白</span><span class="text-[9.200px]">Continu...</span><span class="flex items-center gap-[4px]"><i class="h-px w-[16px] bg-[#333]"></i>默认</span><span class="pl-[4px]">0</span><svg class="ml-[-1px] h-[10px] w-[11px]"><use href="#newvp"/></svg>
          </div>
          <div class="ml-[68px] w-px flex-1 bg-[#525252]"></div>
          <div class="mb-[2px] ml-px flex h-[12px] items-center border border-[#bbb] bg-[#f1f1f1] pl-[4px]"><svg class="h-[6px] w-[4px]"><use href="#left"/></svg><div class="ml-[4px] h-[10px] flex-1 border border-[#999] bg-gradient-to-b from-[#f3f3f3] to-[#cfcfcf]"></div></div>
        </div>
      </div>
      <div class="flex h-[24px] shrink-0 items-center pl-[4px] pt-[10px] pb-[3px] text-[9.100px] text-[#e8e8e8]">全部: 显示了 2 个图层，共 2 个图层</div>
    </div>
  </aside>

  <!-- Linetype manager dialog -->
  <div class="absolute left-[455px] top-[128px] flex h-[198px] w-[320px] flex-col rounded-[5px] border border-[#8b98a8] bg-[linear-gradient(120deg,#dbe3ec,#d3dde8_50%,#e3e8ee_65%,#cfdae6_80%,#d6e0ea)] px-[4px] pb-[4px] text-[9px] text-[#111]">
    <div class="flex h-[20px] items-start justify-end"><div class="flex h-[13px] w-[33px] items-center justify-center rounded-b-[3px] border border-t-0 border-[#9aa5b2]"><svg class="h-[8px] w-[9px]" viewBox="0 0 9 8"><path d="M1 .5h2L4.500 2.500 6 .5h2L5.500 4 8 7.500H6L4.500 5.500 3 7.500H1L3.500 4z" fill="#fff" stroke="#555" stroke-width=".8"/></svg></div></div>
    <div class="flex flex-1 flex-col border border-[#93a0af] bg-[#f0f0f0] pl-[60px] pr-[7px] pt-[21px]">
      <div class="flex h-[122px] flex-col border border-[#8fae98] bg-[#c8ebcb]">
        <div class="flex h-[19px] items-center bg-gradient-to-b from-white to-[#efefef]"><span class="w-[54px]"></span><span class="flex h-[17px] w-[73px] items-center border-l border-[#dedede] pl-[4px]">外观</span><span class="flex h-[17px] items-center border-l border-[#dedede] pl-[4px]">说明</span></div>
        <div class="flex h-[15px] items-center bg-[#3399ff] pl-[59px] text-[9.200px] text-white"><i class="h-px w-[65px] bg-white"></i><span class="pl-[4px]">Solid line</span></div>
        <div class="mt-auto flex h-[12px] items-center bg-[#f1f1f1]"><div class="flex h-[11px] w-[172px] items-center border border-[#999] bg-gradient-to-b from-[#f0f0f0] to-[#c8c8c8] pl-[61px]"><svg class="h-[5px] w-[6px]"><use href="#grip"/></svg></div><svg class="ml-auto mr-[5px] h-[6px] w-[4px]"><use href="#right"/></svg></div>
      </div>
      <div class="mt-[5px] flex gap-[12px] pl-[33px]">
        <button class="flex h-[15px] w-[54px] items-center justify-center rounded-[2px] border border-[#777] bg-gradient-to-b from-[#f4f4f4] to-[#d0d0d0]">取消</button>
        <button class="flex h-[15px] w-[54px] items-center justify-center rounded-[2px] border border-[#777] bg-gradient-to-b from-[#f4f4f4] to-[#d0d0d0]">加载<span class="font-['Liberation_Mono'] text-[8.300px] tracking-[-0.700px]">(L)...</span></button>
        <button class="flex h-[15px] w-[54px] items-center justify-center rounded-[2px] border border-[#777] bg-gradient-to-b from-[#f4f4f4] to-[#d0d0d0]">帮助<span class="font-['Liberation_Mono'] text-[8.300px] tracking-[-1px]">(H)</span></button>
      </div>
    </div>
  </div>

  <!-- Load linetypes dialog -->
  <div class="absolute left-[222px] top-[132px] flex h-[219px] w-[321px] flex-col rounded-[5px] border border-[#4e5f73] bg-[linear-gradient(160deg,#dce9f6,#b4cde8_30%,#c8daed_45%,#a9c5e3_60%,#c3d7ec)] px-[4px] pb-[4px] text-[9px] text-[#111] shadow-[0_0_6px_2px_#222]">
    <div class="flex h-[21px] items-start">
      <svg class="ml-px mt-[5px] h-[11px] w-[11px]" preserveAspectRatio="none" viewBox="0 0 28 24"><use href="#alogo" width="28" height="24"/></svg>
      <span class="pl-[4px] pt-[6px] text-[8.900px]">加载或重载线型</span>
      <div class="ml-auto flex h-[13px] w-[34px] items-center justify-center rounded-b-[3px] border border-t-0 border-[#6b2a20] bg-gradient-to-b from-[#e5a391] via-[#cc5238] to-[#c33f25] text-white"><svg class="h-[7px] w-[8px]"><use href="#cross"/></svg></div>
    </div>
    <div class="flex flex-1 flex-col border border-[#7d8da0] bg-[#f0f0f0] px-[6px]">
      <div class="mt-[5px] flex items-center">
        <button class="flex h-[14px] w-[54px] items-center justify-center rounded-[2px] border border-[#777] bg-gradient-to-b from-[#f4f4f4] to-[#d0d0d0]">文件<span class="font-['Liberation_Mono'] text-[8.800px] tracking-[-0.700px]">(F)...</span></button>
        <div class="ml-[5px] flex h-[16px] w-[199px] border border-[#a7c8e6] bg-white px-[1px] pb-[4px] pt-px"><div class="flex flex-1 items-center bg-[#c8ebcb]"><span class="flex h-[9px] items-center bg-[#3399ff] font-['Liberation_Mono'] text-[7.500px] text-white">acadiso.lin</span></div></div>
      </div>
      <div class="flex h-[21px] items-end pb-[2px]">可用线型</div>
      <div class="flex h-[122px] w-[296px] flex-col border border-[#8fae98] bg-[#f0f0f0]">
        <div class="flex h-[108px]">
          <div class="flex w-[282px] flex-col overflow-hidden bg-[#c8ebcb] text-[9.400px]">
            <div class="flex h-[18px] shrink-0 items-center bg-gradient-to-b from-white to-[#efefef] text-[9px]"><span class="w-[109px] pl-[4px]">线型</span><span class="flex h-[15px] items-center border-l border-[#dedede] pl-[4px]">说明</span></div>
            <div id="linetypes" class="flex flex-col pt-px"></div>
          </div>
          <div class="flex flex-1 flex-col items-center py-[5px] text-[#333]"><svg class="h-[4px] w-[6px] rotate-180"><use href="#down"/></svg><div class="mt-[4px] h-[12px] w-[10px] border border-[#999] bg-gradient-to-r from-[#f3f3f3] to-[#c8c8c8]"></div><svg class="mt-auto h-[4px] w-[6px]"><use href="#down"/></svg></div>
        </div>
        <div class="flex h-[12px] items-center pl-[5px]"><svg class="h-[6px] w-[4px]"><use href="#left"/></svg><div class="ml-[5px] flex h-[11px] w-[196px] items-center justify-center border border-[#999] bg-gradient-to-b from-[#f0f0f0] to-[#c8c8c8]"><svg class="h-[5px] w-[6px]"><use href="#grip"/></svg></div><svg class="ml-[64px] h-[6px] w-[4px]"><use href="#right"/></svg></div>
      </div>
      <div class="mt-[8px] flex gap-[12px] pl-[55px]">
        <button class="flex h-[14px] w-[54px] items-center justify-center rounded-[2px] border-2 border-[#36b0e5] bg-gradient-to-b from-[#eef8fd] to-[#bfe3f6]">确定</button>
        <button class="flex h-[14px] w-[54px] items-center justify-center rounded-[2px] border border-[#777] bg-gradient-to-b from-[#f4f4f4] to-[#d0d0d0]">取消</button>
        <button class="flex h-[14px] w-[54px] items-center justify-center rounded-[2px] border border-[#777] bg-gradient-to-b from-[#f4f4f4] to-[#d0d0d0]">帮助<span class="font-['Liberation_Mono'] text-[8.300px] tracking-[-1px]">(H)</span></button>
      </div>
    </div>
  </div>

  <!-- Watermarks -->
  <div class="absolute left-[766px] top-[430px] flex h-[87px] w-[34px] flex-col overflow-hidden text-white/75">
    <span class="pt-[22px] font-['Liberation_Sans'] text-[41px] font-bold">Bai</span>
    <span class="pl-[3px] text-[20px] leading-[20px]">jingyan</span>
  </div>
  <svg class="absolute left-[840px] top-[430px] h-[12px] w-[32px]" viewBox="0 0 32 12"><ellipse cx="8" cy="10" rx="6" ry="9" fill="#bbb"/><ellipse cx="24" cy="11" rx="6.500" ry="9" fill="#bbb"/></svg>
  <div class="absolute left-[986px] top-[417px] flex h-[30px] w-[30px] items-center rounded-full border-2 border-[#d9efdc] bg-[#45be5c] pl-[2px] text-[8.500px] font-bold text-white">69%</div>
  <div class="absolute left-[800px] top-[442px] flex h-[95px] w-[200px] items-center bg-[#233157] text-[#d4d4d4]">
    <svg class="ml-[10px] h-[62px] w-[48px]" viewBox="810 459 48 62">
      <path d="M815 467l6 4 4-.5 5 4-4 2.500c-1 5 1 9 5 11l14 1q5 1 6 7l-1 6 1 16h-3l-2-14-4-5q-8 3-16 0l-3 8v11h-3l-1-12 1-7q-6-6-7-12 0-5 5-10l1-4z" fill="#ccc"/>
      <g fill="none" stroke="#ccc" stroke-width="1.300"><path d="M824 471q4-5 14-1 12 3 17-7"/><path d="M829 469q-5-3-4-7M834 469q-3-4-2-8M840 471q-4-4-3-8M846 471q-4-3-3-6"/></g>
    </svg>
    <div class="flex flex-col pl-[6px]">
      <span class="flex items-center leading-[30px]"><span class="w-[42px] font-['Inter'] text-[32px] font-medium tracking-[-0.500px]">3D</span><span class="font-['Noto_Sans_CJK_SC'] text-[28px] font-medium">溜溜网</span></span>
      <span class="pt-[3px] font-['Inter'] text-[21px] leading-[21px] tracking-[2.200px]">3D66.COM</span>
    </div>
  </div>

  <script>
    const linetypes = [
      ['ACAD_ISO02W100', 'ISO dash', '__ __ __ __ __ __ __ __ __ __ __ __ __'],
      ['ACAD_ISO03W100', 'ISO dash space', '__    __    __    __    __    __'],
      ['ACAD_ISO04W100', 'ISO long-dash dot', '___ . ___ . ___ . ___ . _'],
      ['ACAD_ISO05W100', 'ISO long-dash double-dot', '___ .. ___ .. ___ .'],
      ['ACAD_ISO06W100', 'ISO long-dash triple-dot', '___ ... ___ ... ____'],
      ['ACAD_ISO07W100', 'ISO dot', '. . . . . . . . . . . . . . . . . . . .']
    ];
    const list = document.getElementById('linetypes');

    linetypes.forEach(([name, description, pattern]) => {
      const longDash = description.includes('long-dash');
      const row = document.createElement('div');
      row.className = "flex h-[15.400px] items-center whitespace-pre";
      row.innerHTML = `
        <span class="w-[110px] shrink-0 text-[9.200px]">${name}</span>
        <span>${description}</span>
        <span class="pl-[3px] ${longDash ? 'tracking-[0.350px]' : 'tracking-normal'}">${pattern}</span>
      `.replace(/>\s+</g, '><').trim();
      list.appendChild(row);
    });
  </script>

</body>
</html>
